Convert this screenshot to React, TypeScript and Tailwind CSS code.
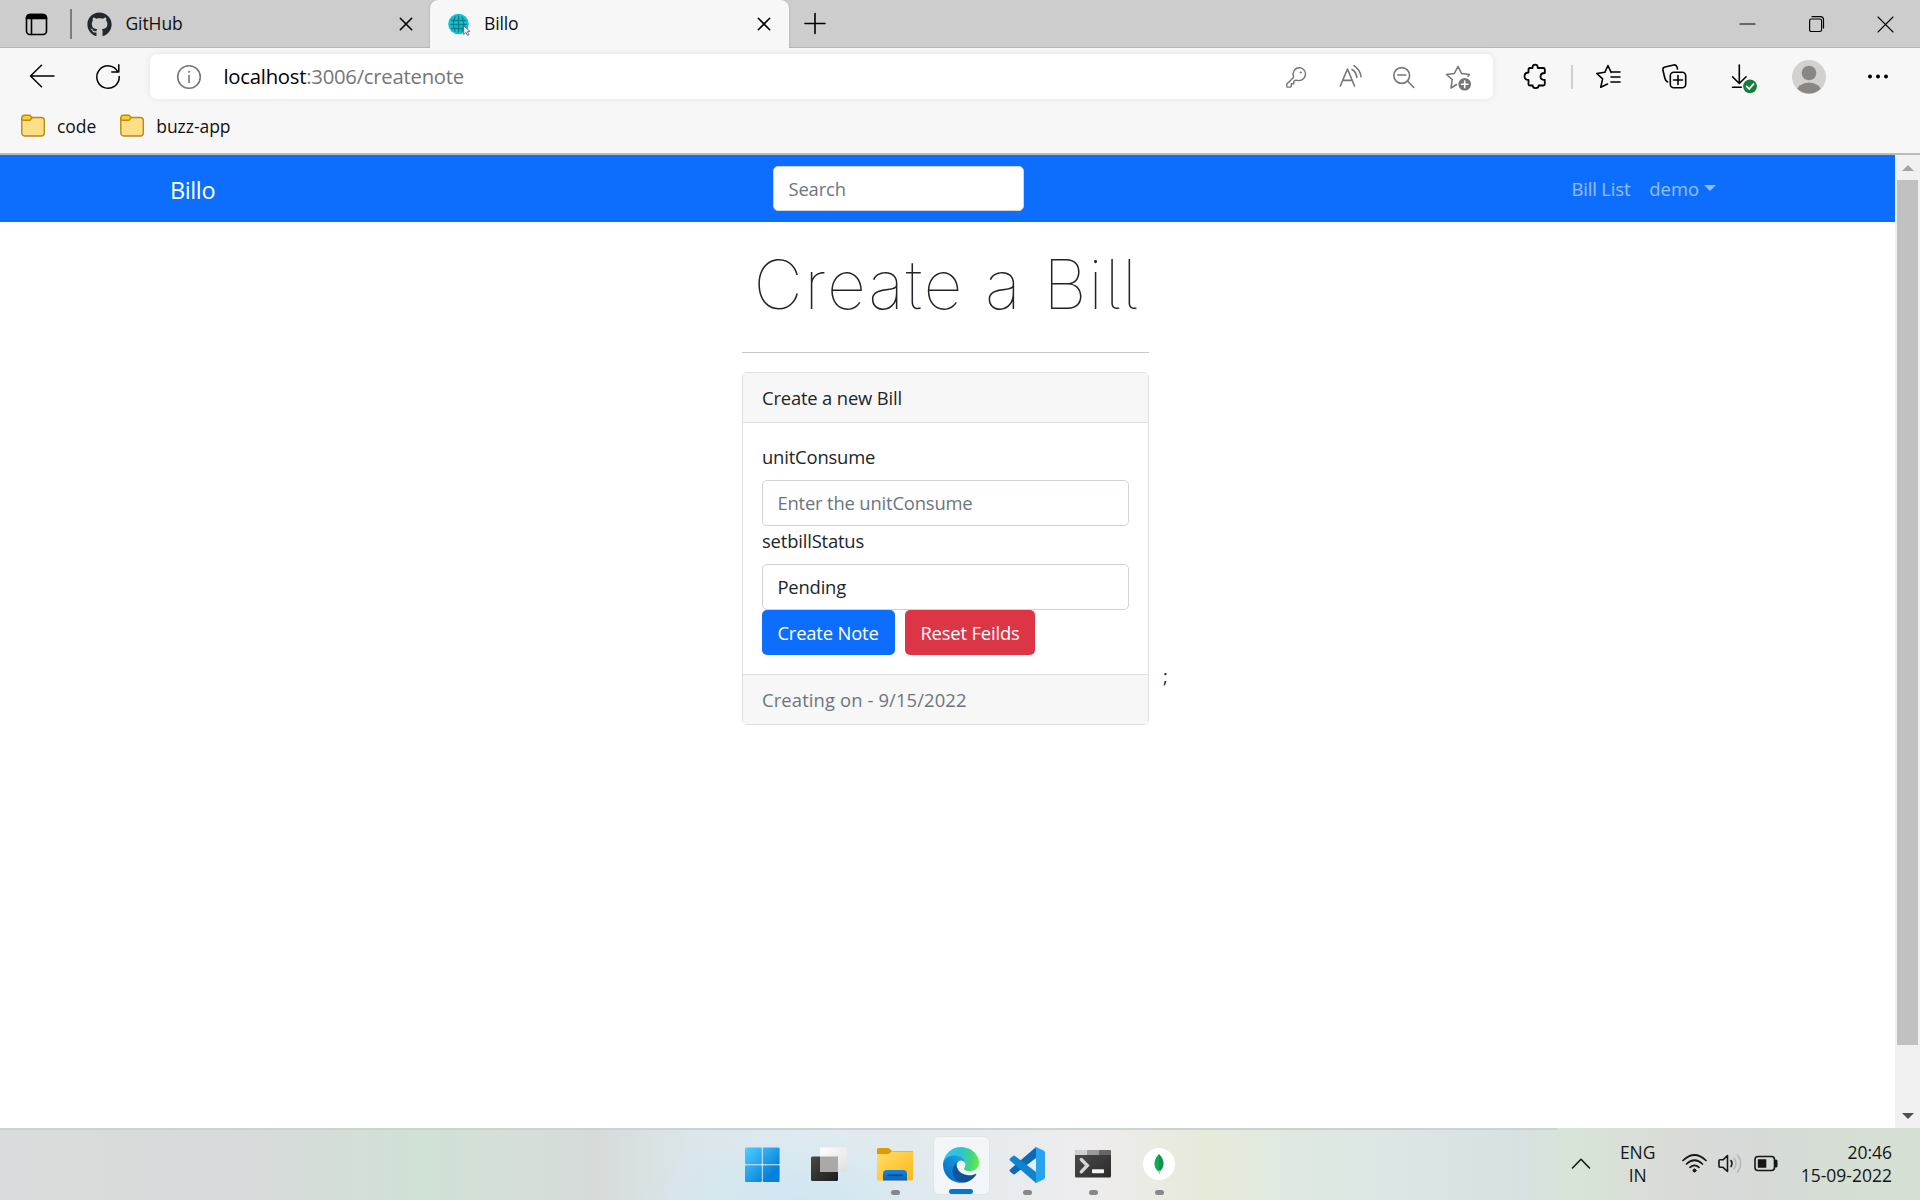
import type { ReactNode } from 'react';
import { FaGithub } from 'react-icons/fa';

function Icon({ children, size = 24, className = '' }: { children: ReactNode; size?: number; className?: string }) {
  return (
    <svg
      width={size}
      height={size}
      viewBox={`0 0 ${size} ${size}`}
      fill="none"
      stroke="currentColor"
      strokeWidth="1.6"
      strokeLinecap="round"
      strokeLinejoin="round"
      className={`shrink-0 overflow-visible ${className}`}
    >
      {children}
    </svg>
  );
}

function CloseX() {
  return (
    <Icon size={12} className="text-black">
      <path d="M0.3 0.3 11.7 11.7M11.7 0.3 0.3 11.7" />
    </Icon>
  );
}

function TabBar() {
  return (
    <div className="flex h-12 shrink-0 bg-[#cdcdcd] shadow-[inset_0_-1px_0_#b4b4b4]">
      <div className="flex w-[72px] items-center pl-[25px]">
        <Icon size={23}>
          <rect x="1.500" y="1.500" width="20" height="20" rx="3.500" />
          <path d="M1.500 5.500V5A3.500 3.500 0 0 1 5 1.500h13a3.500 3.500 0 0 1 3.500 3.500V5.500z" fill="currentColor" />
          <path d="M6.500 6.500v15" />
        </Icon>
      </div>
      <div className="-ml-0.5 h-[30px] w-[1.5px] self-center bg-[#7d7d7d]" />
      <div className="flex w-[358.5px] items-center pl-[15px] pr-[18px]">
        <FaGithub size={25} color="#24292f" />
        <span className="ml-[14px] flex-1 pb-0.5 text-[17.5px] tracking-[-0.1px] text-[#111]">GitHub</span>
        <CloseX />
      </div>
      <div className="relative flex w-[359px] items-center rounded-t-lg bg-[#f7f7f7] pl-[17px] pr-[19px] shadow-[0_0_2px_#999] [clip-path:inset(0_-3px_0_-3px)]">
        <Icon size={24}>
          <circle cx="11.500" cy="12" r="10.300" fill="#12c4d2" stroke="none" />
          <g stroke="#157d8d" strokeWidth="1.500">
            <path d="M11.500 4v16M4.500 8.500h14M4 12.500h15M4.500 16.500h14M8 5c-2 4-2 10 0 14M15 5c2 4 2 10 0 14" />
          </g>
          <path d="m17 14 6 5.500-2.600.3 1.500 3-1.400.7-1.500-3-2 1.700z" fill="#f4f4f8" stroke="#63708a" strokeWidth="1" />
        </Icon>
        <span className="ml-[13px] flex-1 pb-0.5 text-[17.600px] tracking-[-0.15px] text-[#111]">Billo</span>
        <CloseX />
      </div>
      <div className="flex flex-1 items-center pl-4">
        <Icon size={20}>
          <path d="M0 9.500h20M10-.5v20" />
        </Icon>
      </div>
      <div className="flex items-center gap-[54px] pr-[27px] text-black">
        <Icon size={15}>
          <path d="M0 7h15" strokeWidth="1.200" />
        </Icon>
        <Icon size={15}>
          <g strokeWidth="1.200">
            <rect x=".6" y="2" width="12" height="12.500" rx="1.800" />
            <path d="M3 -.4h8.500a3 3 0 0 1 3 3V11" />
          </g>
        </Icon>
        <Icon size={15}>
          <path d="M0 0l15 15M15 0 0 15" strokeWidth="1.100" />
        </Icon>
      </div>
    </div>
  );
}

function Cell({ children, className }: { children: ReactNode; className: string }) {
  return <div className={`flex shrink-0 items-center justify-center ${className}`}>{children}</div>;
}

function Toolbar() {
  return (
    <div className="flex h-[57px] shrink-0 items-center text-black">
      <Cell className="w-[84px] pb-0.5">
        <Icon>
          <path d="M24 12H.5M11.500 1.300.5 12l11 10.700" strokeWidth="1.500" />
        </Icon>
      </Cell>
      <Cell className="w-12 pb-0.5">
        <Icon>
          <path d="M22 8A11.200 11.200 0 1 0 23.200 12.500M22.800 .8V8h-7" strokeWidth="1.500" />
        </Icon>
      </Cell>
      <div className="ml-[18px] flex h-[45px] w-[1343px] shrink-0 items-center rounded-[7px] bg-white pl-[27px] pr-2 text-[#767676] shadow-[0_0_6px_#e2e2e2]">
        <Icon>
          <circle cx="12" cy="12" r="11.300" />
          <path d="M12 10.500v7" />
          <circle cx="12" cy="6.800" r=".6" fill="currentColor" strokeWidth="1" />
        </Icon>
        <span className="ml-[22.500px] flex-1 text-[20.3px] tracking-[-0.25px] text-[#767676]">
          <span className="text-black">localhost</span>:3006/createnote
        </span>
        <Cell className="w-[54px]">
          <Icon>
            <g strokeWidth="1.400">
              <path d="M9.500 12.400 2.800 19v2.600q0 .5.500.5h3.200l.8-.8v-2.500h2.500v-2.400l2-1.200c4.500 1.300 9.500-.8 9.700-6.200C21.500 5 18.500 2.800 15.300 2.800c-4.500 0-7.300 4.500-5.800 9.600z" />
              <circle cx="16.700" cy="7.500" r=".8" fill="currentColor" strokeWidth=".5" />
            </g>
          </Icon>
        </Cell>
        <Cell className="w-[54px]">
          <Icon>
            <path d="M2.300 21 9.500 4l7 17M4.800 15.400h9.300M14 4.500q4.300 2.500 4.800 8M16 .7q6 4 7 11" />
          </Icon>
        </Cell>
        <Cell className="w-[54px]">
          <Icon>
            <circle cx="9.700" cy="10.500" r="7.900" />
            <path d="M15.500 16l6.300 6.500M5.800 10h8" />
          </Icon>
        </Cell>
        <Cell className="w-[54px]">
          <Icon>
            <path d="M10.500 19.500 5 23l1.200-8.500L.5 9.500l7.800-1L12 1.500l3.600 7 7.800 1-1.500 1.700" />
            <circle cx="18.700" cy="19.300" r="6.300" fill="#767676" stroke="none" />
            <path d="M18.700 16v6.600M15.400 19.300H22" stroke="#fff" />
          </Icon>
        </Cell>
      </div>
      <Cell className="ml-[7px] w-[70px] pb-0.5">
        <Icon>
          <path
            d="M5.500 8.500V5.500Q5.500 4 7 4h2.500c0-2 .8-3.300 2.600-3.300S14.800 2 14.800 4h5.500q1.500 0 1.500 1.500v3.500c-2.600 0-4.300 1.200-4.300 3.500s1.700 3.500 4.300 3.500v4q0 1.500-1.500 1.500h-4.600c0 1.600-1 2.600-3 2.600s-3-1-3-2.600H7q-1.500 0-1.500-1.500v-4c-2.400 0-4-1-4-3.700s1.600-3.800 4-3.800z"
            strokeWidth="1.800"
          />
        </Icon>
      </Cell>
      <div className="mr-[2px] ml-px h-6 w-[2px] shrink-0 bg-[#cfcfcf]" />
      <Cell className="w-[66px] pb-0.5">
        <Icon>
          <path d="M15 8.300 12 1.500 8.800 8.300.8 9.500l5.800 5.300L4.700 23.300 11.500 20M15.500 8H24M15 13h9M15 18h9" />
        </Icon>
      </Cell>
      <Cell className="w-[66px] pb-0.5">
        <Icon>
          <rect x="8.300" y="8.300" width="15.400" height="15.400" rx="3.500" />
          <path d="M16 11.500v9M11.500 16h9M15.500 5 15 3q-.8-2.500-3.200-2L3 3Q.5 3.500.9 6L2.800 14q.7 3 2.800 4" />
        </Icon>
      </Cell>
      <Cell className="w-[70px] pb-0.5">
        <Icon>
          <path d="M9.300 1v18.500M2.500 12.800l6.800 6.700 6.800-6.700M2.500 23.300h8.800" />
          <circle cx="20" cy="22.300" r="6.900" fill="#15803b" stroke="none" />
          <path d="m16.800 22.500 2.300 2.500 4.400-4.800" stroke="#fff" strokeWidth="1.800" />
        </Icon>
      </Cell>
      <Cell className="w-[64px]">
        <svg width="34" height="34" viewBox="0 0 34 34">
          <clipPath id="avatar">
            <circle cx="17" cy="17" r="16.500" />
          </clipPath>
          <circle cx="17" cy="17" r="17" fill="#d3d1cf" />
          <circle cx="17" cy="13" r="7.300" fill="#8a8683" />
          <ellipse cx="17" cy="32" rx="12.500" ry="9.500" fill="#8a8683" clipPath="url(#avatar)" />
        </svg>
      </Cell>
      <Cell className="w-[74px]">
        <Icon>
          <g fill="currentColor" stroke="none">
            <circle cx="4" cy="11.500" r="2" />
            <circle cx="12" cy="11.500" r="2" />
            <circle cx="20" cy="11.500" r="2" />
          </g>
        </Icon>
      </Cell>
    </div>
  );
}

function Bookmark({ label }: { label: string }) {
  return (
    <div className="flex items-center">
      <Icon>
        <g stroke="#b98a14" strokeWidth="1.400">
          <path d="M.8 4v15a3 3 0 0 0 3 3h16.500a3 3 0 0 0 3-3V6.500a3 3 0 0 0-3-3H11z" fill="#fedf85" />
          <path d="M.8 4.500V3.800A2.500 2.500 0 0 1 3.300 1.300H9L11 3.500 9 6.300H2.500A1.700 1.700 0 0 1 .8 4.500z" fill="#fcd12c" />
        </g>
      </Icon>
      <span className="ml-3 text-[17.5px] tracking-[-0.05px] text-[#111]">{label}</span>
    </div>
  );
}

function Navbar() {
  return (
    <nav className="flex h-[67px] shrink-0 items-center bg-[#0d6efd]">
      <div className="w-[773px] pl-[170px] pt-1 text-[23.500px] tracking-[-0.4px] text-white">Billo</div>
      <input
        placeholder="Search"
        className="h-[45px] w-[251px] rounded-[5px] border border-[#ced4da] bg-white px-[14.500px] pb-px text-[18.4px] tracking-[-0.15px] placeholder:text-[#6c757d]"
      />
      <div className="ml-auto flex items-center pr-[179px] text-[18.4px] text-white/55">
        <span className="tracking-[-0.15px]">Bill List</span>
        <span className="ml-[19px]">demo</span>
        <span className="ml-[5px] border-x-[6px] border-t-[6px] border-x-transparent border-t-current" />
      </div>
    </nav>
  );
}

const fieldClass =
  'block h-[46px] w-full rounded-[5px] border border-[#ced4da] bg-white px-[14.400px] pb-px text-[18.4px] tracking-[-0.17px] text-[#212529] placeholder:text-[#6c757d]';

function BillForm() {
  return (
    <div className="flex items-end pl-[742px]">
      <div className="w-[407px]">
        <div className="flex h-[130px] items-center justify-center whitespace-nowrap pb-[7px] pl-0.5 font-[Inter] text-[68px] leading-none font-thin tracking-[1.700px] text-[#212529] [font-feature-settings:'cv05'] [font-optical-sizing:none]">
          Create a Bill
        </div>
        <div className="mb-[19px] h-px bg-[#c8c9ca]" />
        <div className="rounded-[5px] border border-[#dfdfdf] text-[18.4px] leading-[28px] tracking-[-0.17px] text-[#212529]">
          <div className="flex h-[50px] items-center border-b border-[#dfdfdf] bg-[#f7f7f7] px-[19px]">Create a new Bill</div>
          <div className="px-[19px] pt-[20px] pb-[19px]">
            <div className="mb-[9px]">unitConsume</div>
            <input placeholder="Enter the unitConsume" className={fieldClass} />
            <div className="mt-px mb-[9px]">setbillStatus</div>
            <input defaultValue="Pending" className={fieldClass} />
            <div className="flex gap-[10px] text-white">
              <button className="h-[45px] w-[133px] rounded-[5px] bg-[#0d6efd] pr-px">Create Note</button>
              <button className="h-[45px] w-[130px] rounded-[5px] bg-[#dc3545]">Reset Feilds</button>
            </div>
          </div>
          <div className="flex h-[50px] items-center border-t border-[#dfdfdf] bg-[#f7f7f7] px-[19px] tracking-[0.12px] text-[#6c757d]">
            Creating on - 9/15/2022
          </div>
        </div>
      </div>
      <span className="mb-[34px] ml-[14px] text-[18.400px] leading-[28.800px] text-[#212529]">;</span>
    </div>
  );
}

function Scrollbar() {
  return (
    <div className="flex w-[25px] shrink-0 flex-col items-center justify-between bg-[#f1f1f1]">
      <div className="flex h-[25px] items-center">
        <span className="border-x-[6px] border-b-[6px] border-x-transparent border-b-[#a3a3a3]" />
      </div>
      <div className="mb-auto h-[865px] w-[21px] bg-[#c1c1c1]" />
      <div className="flex h-[25px] items-center">
        <span className="border-x-[6px] border-t-[6px] border-x-transparent border-t-[#505050]" />
      </div>
    </div>
  );
}

function TaskItem({ children, running, active }: { children: ReactNode; running?: boolean; active?: boolean }) {
  return (
    <div className="flex w-[66px] justify-center">
      <div
        className={
          active
            ? 'flex h-[59px] w-[57px] flex-col items-center justify-between rounded-md border border-[#dfe4e6] bg-[#f3f6f8] pt-[10px]'
            : 'flex h-[59px] w-[57px] flex-col items-center justify-between pt-[11px]'
        }
      >
        {children}
        {active && <span className="h-[5px] w-6 rounded-full bg-[#0078d4]" />}
        {running && <span className="h-[5px] w-[9px] rounded-full bg-[#868888]" />}
      </div>
    </div>
  );
}

function Taskbar() {
  return (
    <div className="relative flex h-[72px] shrink-0 bg-[radial-gradient(ellipse_160px_70px_at_800px_72px,#cfe6f2_0%,transparent_100%),linear-gradient(90deg,#dadbdc_0%,#d8dbdb_13%,#d0e1d5_22%,#d5dfd8_27%,#d6dbda_31%,#dbe6ea_36%,#dfeaef_42%,#e5eaee_50%,#eeeced_57%,#e6ead9_63%,#dfe9e1_67%,#dbe5e5_74%,#d6e1e2_79%,#d7e4d6_82%,#dadbd8_87%,#d6dad8_91%,#d5dfd3_97%,#d6dfd5_100%)]">
      <div className="absolute top-0 left-0 h-[2px] w-[1557px] bg-[#cbd2d2]" />
      <div className="w-[730px] shrink-0" />
      <div className="flex h-[67px] items-start pt-2">
        <TaskItem>
          <svg width="36" height="36" viewBox="0 0 36 36">
            <defs>
              <linearGradient id="win" gradientUnits="userSpaceOnUse" x1="0" y1="0" x2="36" y2="36">
                <stop stopColor="#4fd0ff" />
                <stop offset=".75" stopColor="#0780dc" />
              </linearGradient>
            </defs>
            <g fill="url(#win)">
              <rect x="0" y=".5" width="16.800" height="16.800" rx="1" />
              <rect x="17.800" y=".5" width="16.800" height="16.800" rx="1" />
              <rect x="0" y="18.300" width="16.800" height="16.800" rx="1" />
              <rect x="17.800" y="18.300" width="16.800" height="16.800" rx="1" />
            </g>
          </svg>
        </TaskItem>
        <TaskItem>
          <svg width="36" height="36" viewBox="0 0 36 36">
            <defs>
              <linearGradient id="tv" x1="0" y1="0" x2="1" y2="1">
                <stop stopColor="#4a4846" />
                <stop offset="1" stopColor="#1c1c1c" />
              </linearGradient>
              <linearGradient id="tvw" x1="0" y1="0" x2="1" y2="1">
                <stop stopColor="#fff" />
                <stop offset="1" stopColor="#dfdfdf" />
              </linearGradient>
            </defs>
            <rect x="0" y="9.500" width="27" height="24.500" rx="1.500" fill="url(#tv)" />
            <rect x="9" y=".5" width="27" height="24.500" rx="1.500" fill="url(#tvw)" />
            <path d="M9 9.500h18V25H10.500A1.500 1.500 0 0 1 9 23.500z" fill="#aaa9a8" />
          </svg>
        </TaskItem>
        <TaskItem running>
          <svg width="36" height="36" viewBox="0 0 36 36">
            <defs>
              <linearGradient id="fold" x1="0" y1="0" x2="1" y2="1">
                <stop stopColor="#ffdc6b" />
                <stop offset="1" stopColor="#fbb917" />
              </linearGradient>
              <linearGradient id="foldb" x1="0" y1="0" x2="0" y2="1">
                <stop stopColor="#1584da" />
                <stop offset="1" stopColor="#0a63bd" />
              </linearGradient>
            </defs>
            <path d="M0 2.500Q0 1 1.500 1H11q1 0 2 1l2 2h20q1 0 1 1v8H0z" fill="#de9b04" />
            <path d="M0 7h11q1 0 2-1l1.500-1.500H35q1 0 1 1V32q0 1.500-1.500 1.500h-33Q0 33.500 0 32z" fill="url(#fold)" />
            <path d="M6 33.500V27q0-4 4-4h16q4 0 4 4v6.500z" fill="url(#foldb)" />
            <path d="M11 28.300h14" stroke="#064a92" strokeWidth="1.800" strokeLinecap="round" />
          </svg>
        </TaskItem>
        <TaskItem active>
          <svg width="36" height="36" viewBox="0 0 256 256">
            <defs>
              <linearGradient id="e1" x1="60" y1="177" x2="240" y2="177" gradientUnits="userSpaceOnUse">
                <stop stopColor="#0c59a4" />
                <stop offset="1" stopColor="#114a8b" />
              </linearGradient>
              <linearGradient id="e2" x1="150" y1="100" x2="40" y2="220" gradientUnits="userSpaceOnUse">
                <stop stopColor="#1b9de2" />
                <stop offset=".4" stopColor="#148cd6" />
                <stop offset="1" stopColor="#0870c4" />
              </linearGradient>
              <linearGradient id="e3" x1="10" y1="60" x2="250" y2="110" gradientUnits="userSpaceOnUse">
                <stop stopColor="#35c1f1" />
                <stop offset=".45" stopColor="#2dc3d3" />
                <stop offset=".8" stopColor="#46d875" />
                <stop offset="1" stopColor="#66eb4a" />
              </linearGradient>
            </defs>
            <path d="M231 190c-3 2-7 4-10 5a101 101 0 0 1-36 6c-47 0-88-32-88-74 0-11 7-22 17-27-43 2-54 46-54 72 0 74 68 81 82 81 8 0 20-2 27-5l1 0a128 128 0 0 0 67-53c2-4-2-7-6-5z" fill="url(#e1)" />
            <path d="M106 241a79 79 0 0 1-23-21 81 81 0 0 1 30-120c3-2 8-4 15-4a31 31 0 0 1 25 12c4 5 6 11 6 18 0 0 25-80-80-80-43 0-79 41-79 79a130 130 0 0 0 12 56 128 128 0 0 0 156 67 75 75 0 0 1-62-7z" fill="url(#e2)" />
            <path d="M152 149c-1 1-3 3-3 6 0 3 2 6 5 8 15 10 42 9 42 9 11 0 21-3 30-8a61 61 0 0 0 30-53c0-22-8-37-11-43C224 25 178 0 128 0A128 128 0 0 0 0 126c0-37 37-66 80-66 4 0 24 0 42 10 16 8 24 18 30 28 6 11 7 24 7 29s-3 13-7 22z" fill="url(#e3)" />
          </svg>
        </TaskItem>
        <TaskItem running>
          <svg width="36" height="36" viewBox="0 0 36 36">
            <path d="M27 0v11L6 27q-1 .8-2 0l-3-2.500q-1-1 0-2z" fill="#0a6ab5" />
            <path d="M27 36V25L6 9q-1-.8-2 0L1 11.500q-1 1 0 2z" fill="#1184cf" />
            <path d="M27 0l7.500 3.500Q36 4.300 36 6v24q0 1.700-1.500 2.500L27 36q-.8 0-1.500-1l1.500-1V2l-1.500-1Q26.200 0 27 0z" fill="#28a3f0" />
          </svg>
        </TaskItem>
        <TaskItem running>
          <svg width="36" height="36" viewBox="0 0 36 36">
            <defs>
              <linearGradient id="term" x1="0" y1="0" x2="1" y2="1">
                <stop stopColor="#4d4d4d" />
                <stop offset="1" stopColor="#2b2b2b" />
              </linearGradient>
            </defs>
            <rect x="0" y="3" width="36" height="27.500" rx="1.500" fill="url(#term)" />
            <path d="M1.500 3H12v5H0V4.500Q0 3 1.500 3z" fill="#cfcfcf" />
            <path d="M12 3h12v5H12z" fill="#9a9a9a" />
            <path d="M24 3h10.500Q36 3 36 4.500V8H24z" fill="#666" />
            <path d="m6.300 12.500 6 6-6 6.300" stroke="#d5d5d5" strokeWidth="3.400" fill="none" strokeLinecap="round" />
            <rect x="17" y="22.300" width="12" height="4" rx=".7" fill="#f2f2f2" />
          </svg>
        </TaskItem>
        <TaskItem running>
          <svg width="36" height="36" viewBox="0 0 36 36">
            <circle cx="18" cy="17" r="16" fill="#fff" />
            <path d="M18 7q5 5 4.500 10.500Q22 22 18 25z" fill="#12924f" />
            <path d="M18 7q-5 5-4.500 10.500Q14 22 18 25z" fill="#13aa52" />
            <path d="M18.300 23v4" stroke="#a9b7ae" strokeWidth="1" />
          </svg>
        </TaskItem>
      </div>
      <div className="ml-auto flex items-center text-[17.500px] leading-[23px] text-[#161616]">
        <Icon size={18} className="mr-[29px]">
          <path d="M.5 13 9 4.300 17.500 13" />
        </Icon>
        <div className="w-[38px] text-center">
          ENG
          <br />
          IN
        </div>
        <svg width="25" height="22" viewBox="0 0 25 22" className="ml-[25px]" fill="none" stroke="currentColor" strokeWidth="1.700" strokeLinecap="round">
          <path d="M1 7.500q11.500-11 23 0M4.500 11q8-7.500 16 0M8 14.300q4.500-4 9 0" />
          <circle cx="12.500" cy="17.500" r="1.500" fill="currentColor" strokeWidth="1" />
        </svg>
        <svg width="25" height="22" viewBox="0 0 25 22" className="ml-[11px]" fill="none" stroke="currentColor" strokeWidth="1.600" strokeLinecap="round" strokeLinejoin="round">
          <path d="M1 7.800q0-1 1-1h3L9.500 2.500v16L5 14.300H2q-1 0-1-1zM13 7.500q2 3 0 6" />
          <path d="M16 5q4 5.500 0 11M19.500 2q6.500 8.500 0 17" stroke="#b3b7b5" />
        </svg>
        <svg width="25" height="22" viewBox="0 0 25 22" className="ml-[11px]" fill="none" stroke="currentColor" strokeWidth="1.600">
          <rect x="1" y="3.500" width="19.500" height="14" rx="3" />
          <rect x="3.800" y="6.300" width="8.500" height="8.400" rx=".5" fill="currentColor" stroke="none" />
          <path d="M22 8v5" strokeWidth="3" strokeLinecap="round" />
        </svg>
        <div className="mr-[28px] ml-[22px] text-right">
          20:46
          <br />
          15-09-2022
        </div>
      </div>
    </div>
  );
}

export default function App() {
  return (
    <div className="flex h-[1200px] w-[1920px] flex-col overflow-hidden bg-white font-['Open_Sans','Noto_Sans',sans-serif]">
      <TabBar />
      <div className="flex h-[107px] shrink-0 flex-col border-b-2 border-[#bcbcbc] bg-[#f7f7f7]">
        <Toolbar />
        <div className="flex h-[42px] items-center gap-[24px] pl-[21px]">
          <Bookmark label="code" />
          <Bookmark label="buzz-app" />
        </div>
      </div>
      <div className="flex min-h-0 flex-1">
        <main className="flex min-w-0 flex-1 flex-col">
          <Navbar />
          <BillForm />
        </main>
        <Scrollbar />
      </div>
      <Taskbar />
    </div>
  );
}
